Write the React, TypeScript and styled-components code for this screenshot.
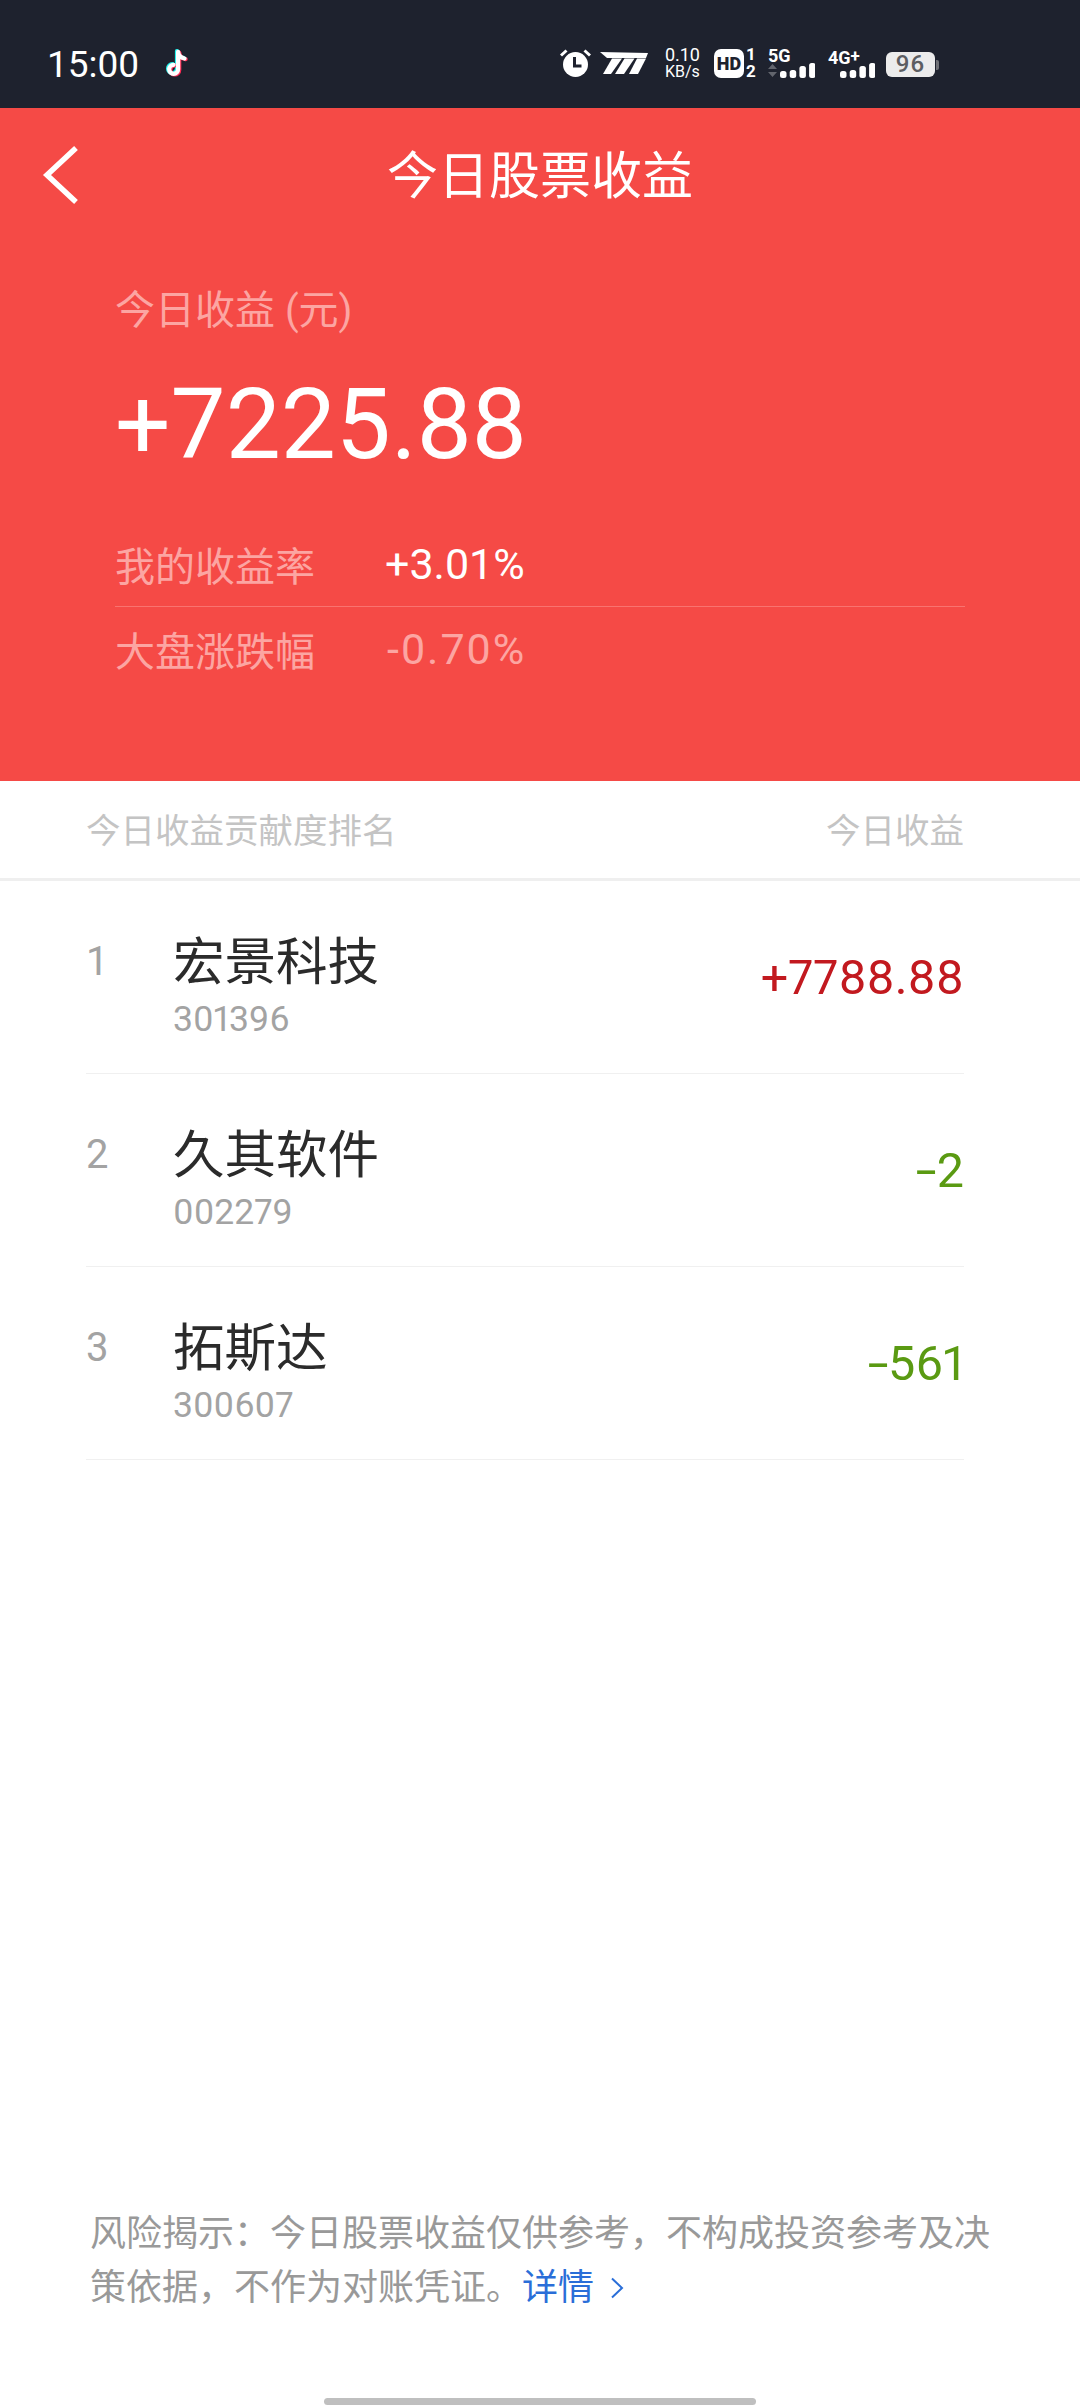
import React from "react";
import styled, { createGlobalStyle } from "styled-components";

const FONT = `"Roboto", "Noto Sans CJK SC", sans-serif`;

const GlobalStyle = createGlobalStyle`
  html, body {
    margin: 0;
    padding: 0;
    background: #fff;
  }
`;

const Page = styled.div`
  width: 1080px;
  height: 2408px;
  display: flex;
  flex-direction: column;
  background: #fff;
  font-family: ${FONT};
  overflow: hidden;
`;

const StatusBar = styled.div`
  height: 108px;
  flex: none;
  background: #1e222e;
  display: flex;
  align-items: center;
  justify-content: space-between;
  padding: 18px 145px 0 47px;
  box-sizing: border-box;
  color: #fff;
`;

const StatusLeft = styled.div`
  display: flex;
  align-items: center;
  gap: 25px;
`;

const Clock = styled.span`
  font-size: 37px;
  line-height: 42px;
  margin-top: 4px;
`;

const StatusRight = styled.div`
  display: flex;
  align-items: center;
`;

const StatusSlot = styled.div<{ $ml: number }>`
  display: flex;
  margin-left: ${(p) => p.$ml}px;
`;

const NetSpeed = styled.div`
  display: flex;
  flex-direction: column;
  align-items: center;
  font-size: 18px;
  line-height: 17px;

  span + span {
    font-size: 16px;
  }
`;

const HdBadge = styled.div`
  width: 30px;
  height: 29px;
  border-radius: 7px;
  background: #fff;
  color: #1e222e;
  font-size: 18px;
  font-weight: 900;
  line-height: 29px;
  text-align: center;
`;

const SimDigits = styled.div`
  display: flex;
  flex-direction: column;
  align-items: center;
  width: 10px;
  font-size: 17px;
  font-weight: 700;
  line-height: 17px;
`;

const Signal = styled.div`
  display: flex;
  flex-direction: column;
  font-size: 18px;
  font-weight: 700;
  line-height: 14px;
`;

const Network = styled.span`
  height: 14px;
  white-space: nowrap;
`;

const NetworkPlus = styled.span`
  font-size: 17px;
  vertical-align: 2px;
`;

const Battery = styled.div`
  width: 49px;
  height: 25px;
  margin-top: 3px;
  border-radius: 6px;
  background: #ececec;
  color: #5c5e62;
  font-size: 24px;
  font-weight: 500;
  letter-spacing: 1px;
  line-height: 25px;
  text-align: center;
  position: relative;

  &::after {
    content: "";
    position: absolute;
    right: -4px;
    top: 8px;
    width: 3px;
    height: 10px;
    background: #6f7176;
    border-radius: 0 2px 2px 0;
  }
`;

const Hero = styled.section`
  height: 673px;
  flex: none;
  background: #f54a46;
  color: #fff;
  box-sizing: border-box;
`;

const NavBar = styled.header`
  height: 134px;
  padding-bottom: 6px;
  box-sizing: border-box;
  position: relative;
  display: flex;
  align-items: center;
  justify-content: center;
  font-size: 51px;
`;

const BackButton = styled.div`
  position: absolute;
  left: 41px;
  top: 37px;
  display: flex;
`;

const Summary = styled.div`
  padding: 0 115px;
  display: flex;
  flex-direction: column;
`;

const SummaryLabel = styled.div`
  margin-top: 46px;
  font-size: 40px;
  line-height: 46px;
  color: #fca5a2;
`;

const TotalAmount = styled.div`
  margin: 35px 0 41px;
  font-size: 98px;
  line-height: 112px;
`;

const StatRow = styled.div<{ $divided?: boolean }>`
  display: flex;
  align-items: center;
  height: ${(p) => (p.$divided ? 85 : 84)}px;
  padding-bottom: ${(p) => (p.$divided ? 1 : 0)}px;
  border-bottom: ${(p) => (p.$divided ? "1px solid #f9736f" : "none")};
  box-sizing: border-box;
  font-size: 40px;
  color: #fca5a2;
`;

const StatName = styled.span`
  width: 270px;
  flex: none;
`;

const StatValue = styled.span<{ $muted?: boolean }>`
  font-size: 43px;
  color: ${(p) => (p.$muted ? "#fca5a2" : "#fff")};
  letter-spacing: ${(p) => (p.$muted ? 2 : 0)}px;
  padding-left: ${(p) => (p.$muted ? 2 : 0)}px;
`;

const RankHeader = styled.div`
  height: 100px;
  flex: none;
  display: flex;
  align-items: center;
  justify-content: space-between;
  padding: 0 116px 4px 86px;
  box-sizing: border-box;
  border-bottom: 3px solid #efefef;
  font-size: 34.5px;
  color: #c4c4c4;
`;

const RankList = styled.div`
  padding: 0 116px 0 86px;
  flex: none;
`;

const RankRow = styled.div`
  height: 193px;
  display: flex;
  box-sizing: border-box;
  border-bottom: 1px solid #f0f0f0;
`;

const RankIndex = styled.div`
  width: 87px;
  flex: none;
  font-size: 40px;
  line-height: 46px;
  color: #a3a3a3;
  padding-top: 58px;
`;

const StockInfo = styled.div`
  flex: 1;
  padding-top: 54px;
`;

const StockName = styled.div`
  font-size: 51.5px;
  line-height: 56px;
  color: #2b2b2b;
`;

const StockCode = styled.div`
  font-size: 35.5px;
  font-variant-numeric: proportional-nums;
  line-height: 40px;
  color: #a3a3a3;
  margin-top: 8px;
`;

const StockGain = styled.div<{ $up: boolean }>`
  align-self: center;
  padding-top: 2px;
  font-size: 48.5px;
  font-variant-numeric: proportional-nums;
  line-height: 56px;
  color: ${(p) => (p.$up ? "#c2191f" : "#5a9a12")};
`;

// the minus in the reference is longer than the Roboto hyphen
const MinusSign = styled.span`
  display: inline-block;
  margin-left: 8px;
  transform: scaleX(1.55);
  transform-origin: right center;
`;

const Spacer = styled.div`
  flex: 1;
`;

const RiskNote = styled.div`
  padding-left: 90px;
  font-size: 36px;
  line-height: 54px;
  color: #999;
`;

const RiskLine = styled.div`
  display: flex;
  align-items: center;
`;

const DetailLink = styled.span`
  color: #2a6ed8;
  display: inline-flex;
  align-items: center;
  gap: 16px;
`;

const HomeBarRow = styled.div`
  display: flex;
  justify-content: center;
  padding: 83px 0 3px;
`;

const HomeBar = styled.div`
  width: 432px;
  height: 7px;
  border-radius: 4px;
  background: #bfbfbf;
`;

const TikTokIcon = () => {
  const d = "M13 2v12.5a3.2 3.2 0 1 1-3.2-3.2M13 2c.3 2.600 2 4.400 4.600 4.800";
  return (
    <svg width="24" height="28" viewBox="3 0 17 20" fill="none" strokeWidth="3" strokeLinecap="round">
      <path d={d} stroke="#25f4ee" transform="translate(-.8 -.5)" />
      <path d={d} stroke="#fe2c55" transform="translate(.8 .5)" />
      <path d={d} stroke="#fff" />
    </svg>
  );
};

const AlarmIcon = () => (
  <svg width="31" height="28" viewBox="0 0 31 28">
    <circle cx="15.500" cy="15.500" r="12.500" fill="#fff" />
    <path d="M14.500 8v9h7" fill="none" stroke="#1e222e" strokeWidth="3" />
    <path d="M1 6.500l5.500-5M30 6.500l-5.500-5" stroke="#fff" strokeWidth="3" />
  </svg>
);

const SpeedLogo = () => (
  <svg width="48" height="22" viewBox="0 0 48 22" fill="#fff">
    <path d="M0 0l48 1-2 5H7z" />
    <path d="M12 6.500h10L11 22H3z" />
    <path d="M24.500 6.500h10L24 22h-9z" />
    <path d="M37 6.500h9L38 22h-9z" />
  </svg>
);

const SignalBars = ({ arrows }: { arrows?: boolean }) => (
  <svg width="47" height="15" viewBox="0 0 47 15">
    {arrows && <path d="M0 6l4.500-5L9 6zM0 9h9l-4.500 5z" fill="#62656d" />}
    {[7, 8, 12, 15].map((h, i) => (
      <rect key={i} x={12 + i * 9.700} y={15 - h} width="6.500" height={h} rx="2.500" fill="#fff" />
    ))}
  </svg>
);

const BackChevron = () => (
  <svg width="38" height="60" viewBox="0 0 38 60" fill="none" stroke="#fff" strokeWidth="5.500">
    <path d="M35 3L6 30l29 27" />
  </svg>
);

const DetailChevron = () => (
  <svg width="14" height="22" viewBox="0 0 14 22" fill="none" stroke="#2a6ed8" strokeWidth="2">
    <path d="M2 1.500l10 9.500L2 20.500" />
  </svg>
);

const stocks = [
  { rank: 1, name: "宏景科技", code: "301396", gain: "+7788.88", up: true },
  { rank: 2, name: "久其软件", code: "002279", gain: "2", up: false },
  { rank: 3, name: "拓斯达", code: "300607", gain: "561", up: false },
];

export default function App() {
  return (
    <Page>
      <GlobalStyle />
      <StatusBar>
        <StatusLeft>
          <Clock>15:00</Clock>
          <TikTokIcon />
        </StatusLeft>
        <StatusRight>
          <StatusSlot $ml={0}>
            <AlarmIcon />
          </StatusSlot>
          <StatusSlot $ml={9}>
            <SpeedLogo />
          </StatusSlot>
          <StatusSlot $ml={17}>
            <NetSpeed>
              <span>0.10</span>
              <span>KB/s</span>
            </NetSpeed>
          </StatusSlot>
          <StatusSlot $ml={14}>
            <HdBadge>HD</HdBadge>
          </StatusSlot>
          <StatusSlot $ml={2}>
            <SimDigits>
              <span>1</span>
              <span>2</span>
            </SimDigits>
          </StatusSlot>
          <StatusSlot $ml={12}>
            <Signal>
              <Network>5G</Network>
              <SignalBars arrows />
            </Signal>
          </StatusSlot>
          <StatusSlot $ml={13}>
            <Signal>
              <Network>
                4G<NetworkPlus>+</NetworkPlus>
              </Network>
              <SignalBars />
            </Signal>
          </StatusSlot>
          <StatusSlot $ml={11}>
            <Battery>96</Battery>
          </StatusSlot>
        </StatusRight>
      </StatusBar>

      <Hero>
        <NavBar>
          <BackButton>
            <BackChevron />
          </BackButton>
          今日股票收益
        </NavBar>
        <Summary>
          <SummaryLabel>今日收益 (元)</SummaryLabel>
          <TotalAmount>+7225.88</TotalAmount>
          <StatRow $divided>
            <StatName>我的收益率</StatName>
            <StatValue>+3.01%</StatValue>
          </StatRow>
          <StatRow>
            <StatName>大盘涨跌幅</StatName>
            <StatValue $muted>-0.70%</StatValue>
          </StatRow>
        </Summary>
      </Hero>

      <RankHeader>
        <span>今日收益贡献度排名</span>
        <span>今日收益</span>
      </RankHeader>
      <RankList>
        {stocks.map((s) => (
          <RankRow key={s.rank}>
            <RankIndex>{s.rank}</RankIndex>
            <StockInfo>
              <StockName>{s.name}</StockName>
              <StockCode>{s.code}</StockCode>
            </StockInfo>
            <StockGain $up={s.up}>
              {!s.up && <MinusSign>-</MinusSign>}
              {s.gain}
            </StockGain>
          </RankRow>
        ))}
      </RankList>

      <Spacer />
      <RiskNote>
        <RiskLine>风险揭示：今日股票收益仅供参考，不构成投资参考及决</RiskLine>
        <RiskLine>
          <span>策依据，不作为对账凭证。</span>
          <DetailLink>
            详情
            <DetailChevron />
          </DetailLink>
        </RiskLine>
      </RiskNote>
      <HomeBarRow>
        <HomeBar />
      </HomeBarRow>
    </Page>
  );
}
